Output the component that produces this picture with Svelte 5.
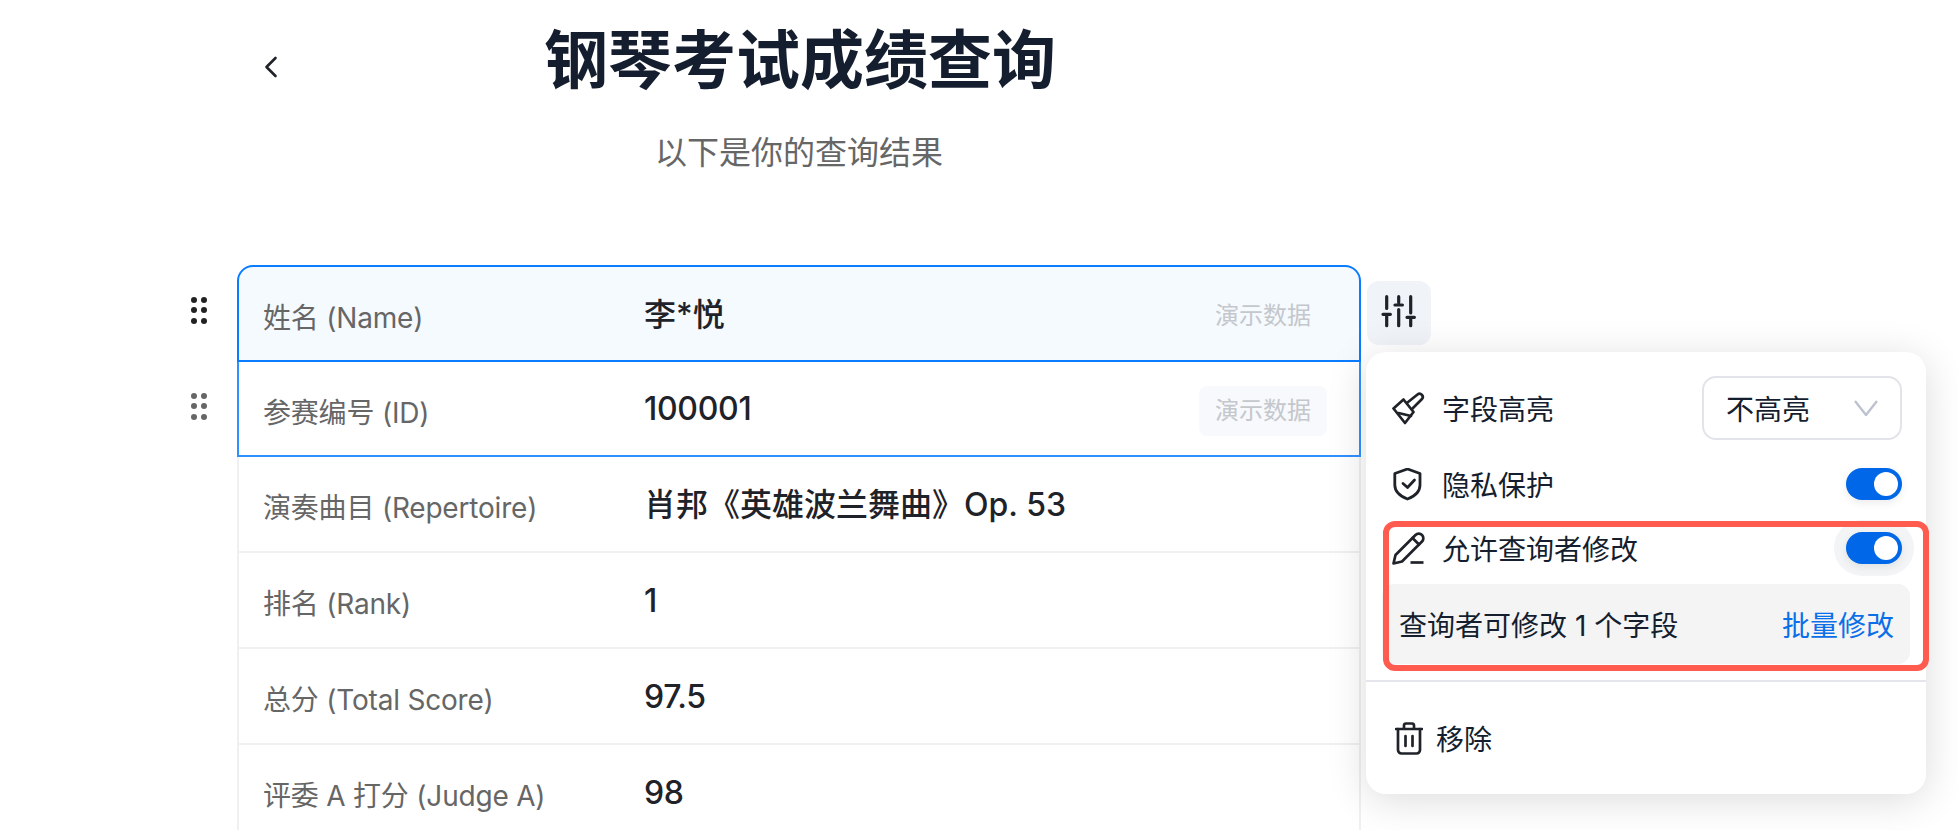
<script>
  const rows = [
    { label: '姓名 (Name)', value: '李*悦', tag: true, state: 'selected', cjk: true },
    { label: '参赛编号 (ID)', value: '100001', tag: true, state: 'hovered' },
    { label: '演奏曲目 (Repertoire)', value: '肖邦《英雄波兰舞曲》Op. 53', cjk: true },
    { label: '排名 (Rank)', value: '1' },
    { label: '总分 (Total Score)', value: '97.5' },
    { label: '评委 A 打分 (Judge A)', value: '98' }
  ];

  let privacy = $state(true);
  let editable = $state(true);
</script>

<div class="page">
  <header class="head">
    <button class="back" aria-label="返回">
      <svg width="14" height="22" viewBox="0 0 14 22" fill="none"><path d="M11.5 2 L2.5 11 L11.5 20" stroke="#1f2329" stroke-width="2.6" stroke-linecap="round" stroke-linejoin="round"/></svg>
    </button>
    <h1>钢琴考试成绩查询</h1>
    <p>以下是你的查询结果</p>
  </header>

  <div class="body">
    <div class="handles">
      {#each rows.slice(0, 2) as row, i}
        <div class="handle" class:dark={i === 0}>
          {#each Array(6) as _}<span></span>{/each}
        </div>
      {/each}
    </div>

    <div class="table">
      {#each rows as row}
        <div class="row {row.state || ''}">
          <div class="label">{row.label}</div>
          <div class="value" class:cjk={row.cjk}>{row.value}</div>
          {#if row.tag}<span class="tag">演示数据</span>{/if}
        </div>
      {/each}
    </div>

    <div class="side">
      <button class="config" aria-label="字段设置">
        <svg width="40" height="40" viewBox="0 0 40 40" fill="none" stroke="#1f2329" stroke-width="3.2" stroke-linecap="round">
          <path d="M7.7 3.7 V15.5 M4 21.3 H11.4 M7.7 21.3 V32.7 M19.7 3.7 V9.5 M16 12 H23.4 M19.7 16.5 V32.7 M31.7 3.7 V20 M28 24.3 H35.4 M31.7 24.3 V32.7"/>
        </svg>
      </button>

      <div class="panel">
        <div class="item first">
          <svg class="ico" width="33" height="34" viewBox="0 0 33 34" fill="none" stroke="#1f2329" stroke-width="2.7" stroke-linejoin="round" stroke-linecap="round">
            <path d="M11.5 8.5 L1.5 17.5 L13 32 L21.5 21 Z"/>
            <path d="M6.5 22 L19 25"/>
            <path d="M15.5 11.5 L25.5 3.5 a3.2 3.2 0 0 1 4.5 4.5 L20 18"/>
          </svg>
          <span class="name">字段高亮</span>
          <div class="select">
            <span>不高亮</span>
            <svg width="24" height="16" viewBox="0 0 24 16" fill="none"><path d="M1 1 L12 15 L23 1" stroke="#bcc3cf" stroke-width="2.4"/></svg>
          </div>
        </div>

        <div class="item">
          <svg class="ico" width="33" height="33" viewBox="0 0 33 33" fill="none" stroke="#1f2329" stroke-width="2.8" stroke-linejoin="round" stroke-linecap="round">
            <path d="M15.5 1 L28 5.5 V17 C28 24 22 28.5 15.5 31 C9 28.5 2.8 24 2.8 17 V5.5 Z"/>
            <path d="M11 15.5 L15.5 19.5 L22.5 12"/>
          </svg>
          <span class="name">隐私保护</span>
          <button class="switch" class:on={privacy} aria-label="隐私保护" onclick={() => (privacy = !privacy)}><i></i></button>
        </div>

        <div class="item edit">
          <svg class="ico" width="33" height="33" viewBox="0 0 33 33" fill="none" stroke="#1f2329" stroke-width="2.7" stroke-linejoin="round" stroke-linecap="round">
            <path d="M1.5 31.5 L3.5 23 L23.5 3 a3.6 3.6 0 0 1 6.5 6.5 L10 29.5 Z"/>
            <path d="M20.5 6 L27 12.5"/>
            <path d="M18.5 30.5 H31.5" stroke-linecap="butt"/>
          </svg>
          <span class="name">允许查询者修改</span>
          <span class="halo">
            <button class="switch" class:on={editable} aria-label="允许查询者修改" onclick={() => (editable = !editable)}><i></i></button>
          </span>
        </div>

        <div class="sub">
          <span>查询者可修改 1 个字段</span>
          <span class="link">批量修改</span>
        </div>

        <div class="remove">
          <svg width="28" height="33" viewBox="0 0 28 33" fill="none" stroke="#1f2329" stroke-width="2.7" stroke-linejoin="round" stroke-linecap="round">
            <path d="M1 7 H27"/>
            <path d="M9 6.5 V3.5 a2 2 0 0 1 2 -2 h6 a2 2 0 0 1 2 2 V6.5"/>
            <path d="M3 7 V28 a3.5 3.5 0 0 0 3.5 3.5 h15 a3.5 3.5 0 0 0 3.5 -3.5 V7"/>
            <path d="M10.5 14 V24 M17.5 14 V24"/>
          </svg>
          <span>移除</span>
        </div>

        <div class="mark"></div>
      </div>
    </div>
  </div>
</div>

<style>
  :global(body) {
    margin: 0;
    background: #fff;
    overflow: hidden;
  }

  .page {
    height: 830px;
    overflow: hidden;
    font-family: Inter, "Noto Sans CJK SC", sans-serif;
    color: #1f2329;
  }

  button {
    border: none;
    padding: 0;
    background: none;
    cursor: pointer;
    font: inherit;
  }

  .head {
    position: relative;
    width: 1124px;
    height: 265px;
    margin-left: 237px;
    text-align: center;
  }

  .back {
    position: absolute;
    left: 27px;
    top: 56px;
    display: flex;
  }

  h1 {
    margin: 0;
    padding: 14px 0 0 2px;
    font-size: 64px;
    line-height: 92px;
    font-weight: 700;
    color: #141e2e;
  }

  .head p {
    margin: 0;
    padding-top: 23px;
    font-size: 32px;
    line-height: 48px;
    color: #666;
  }

  .body {
    display: flex;
    padding-left: 191px;
  }

  .handles {
    width: 46px;
  }

  .handle {
    display: grid;
    grid-template-columns: repeat(2, 6px);
    grid-auto-rows: 6px;
    gap: 4.3px 4px;
    height: 96px;
    padding-top: 32px;
    box-sizing: border-box;
    align-content: start;
  }

  .handle span {
    border-radius: 50%;
    background: #666;
  }

  .handle.dark span {
    background: #222;
  }

  .table {
    width: 1124px;
    flex: none;
  }

  .row {
    display: grid;
    grid-template-columns: 381px 1fr auto;
    align-items: center;
    height: 96px;
    box-sizing: border-box;
    padding: 0 32px 0 24px;
    border: 2px solid #f0f0f0;
    border-top: none;
  }

  .row.selected {
    height: 97px;
    background: #f5faff;
    border: 2px solid #0a7cff;
    border-radius: 16px 16px 0 0;
  }

  .row.hovered {
    height: 95px;
    border-color: #2f90ff;
  }

  .label {
    font-size: 28px;
    letter-spacing: -0.2px;
    color: #666;
    padding-top: 4px;
  }

  .value {
    font-size: 32px;
    font-weight: 450;
    letter-spacing: -0.3px;
    color: #1f2329;
  }

  .value.cjk {
    margin-bottom: 4px;
    letter-spacing: 0;
  }

  .tag {
    width: 128px;
    height: 50px;
    margin-top: 4px;
    line-height: 50px;
    text-align: center;
    border-radius: 8px;
    background: #f7f9fc;
    font-size: 24px;
    color: #c4c7cc;
  }

  .selected .tag {
    background: #f5faff;
  }

  .side {
    margin-left: 5px;
    padding-top: 16px;
  }

  .config {
    display: flex;
    align-items: center;
    justify-content: center;
    width: 64px;
    height: 64px;
    margin-left: 1px;
    border-radius: 12px;
    background: #f0f3f8;
  }

  .panel {
    position: relative;
    z-index: 1;
    width: 560px;
    height: 442px;
    margin-top: 7px;
    box-sizing: border-box;
    border-radius: 20px;
    background: #fff;
    box-shadow: 0 6px 40px rgba(0, 0, 0, 0.14);
    font-size: 28px;
    color: #141e2e;
  }

  .item {
    display: flex;
    align-items: center;
    height: 32px;
    padding: 0 24px 0 26px;
  }

  .item.first {
    height: 64px;
    padding-top: 24px;
  }

  .item + .item {
    margin-top: 28px;
  }

  .item.edit {
    margin-top: 32px;
  }

  .ico {
    flex: none;
  }

  .name {
    margin-left: 17px;
    flex: 1;
  }

  .select {
    display: flex;
    align-items: center;
    justify-content: space-between;
    width: 200px;
    height: 64px;
    box-sizing: border-box;
    padding: 0 22px 0 22px;
    border: 2px solid #e2e4ea;
    border-radius: 14px;
  }

  .switch {
    position: relative;
    display: block;
    width: 56px;
    height: 32px;
    border-radius: 16px;
    background: #c9cdd4;
    box-shadow: 0 3px 8px rgba(0, 0, 0, 0.08);
  }

  .switch.on {
    background: #0068e8;
  }

  .switch i {
    position: absolute;
    top: 4px;
    left: 4px;
    width: 24px;
    height: 24px;
    border-radius: 50%;
    background: #fff;
  }

  .switch.on i {
    left: 28px;
  }

  .halo {
    display: flex;
    align-items: center;
    justify-content: center;
    width: 80px;
    height: 56px;
    margin: -12px -12px -12px 0;
    border-radius: 28px;
    background: #f3f4f6;
  }

  .sub {
    display: flex;
    align-items: center;
    justify-content: space-between;
    height: 80px;
    margin: 20px 16px 0;
    padding: 0 16px 0 17px;
    border-radius: 12px;
    background: #f4f4f5;
  }

  .link {
    color: #0b6fe8;
  }

  .remove {
    display: flex;
    align-items: center;
    gap: 13px;
    height: 112px;
    margin-top: 16px;
    padding: 0 29px;
    border-top: 2px solid #e5e6eb;
  }

  /* 红框标注 */
  .mark {
    position: absolute;
    left: 17px;
    top: 169px;
    width: 546px;
    height: 150px;
    box-sizing: border-box;
    border: 6px solid #ff5c4f;
    border-radius: 12px;
    pointer-events: none;
  }
</style>
